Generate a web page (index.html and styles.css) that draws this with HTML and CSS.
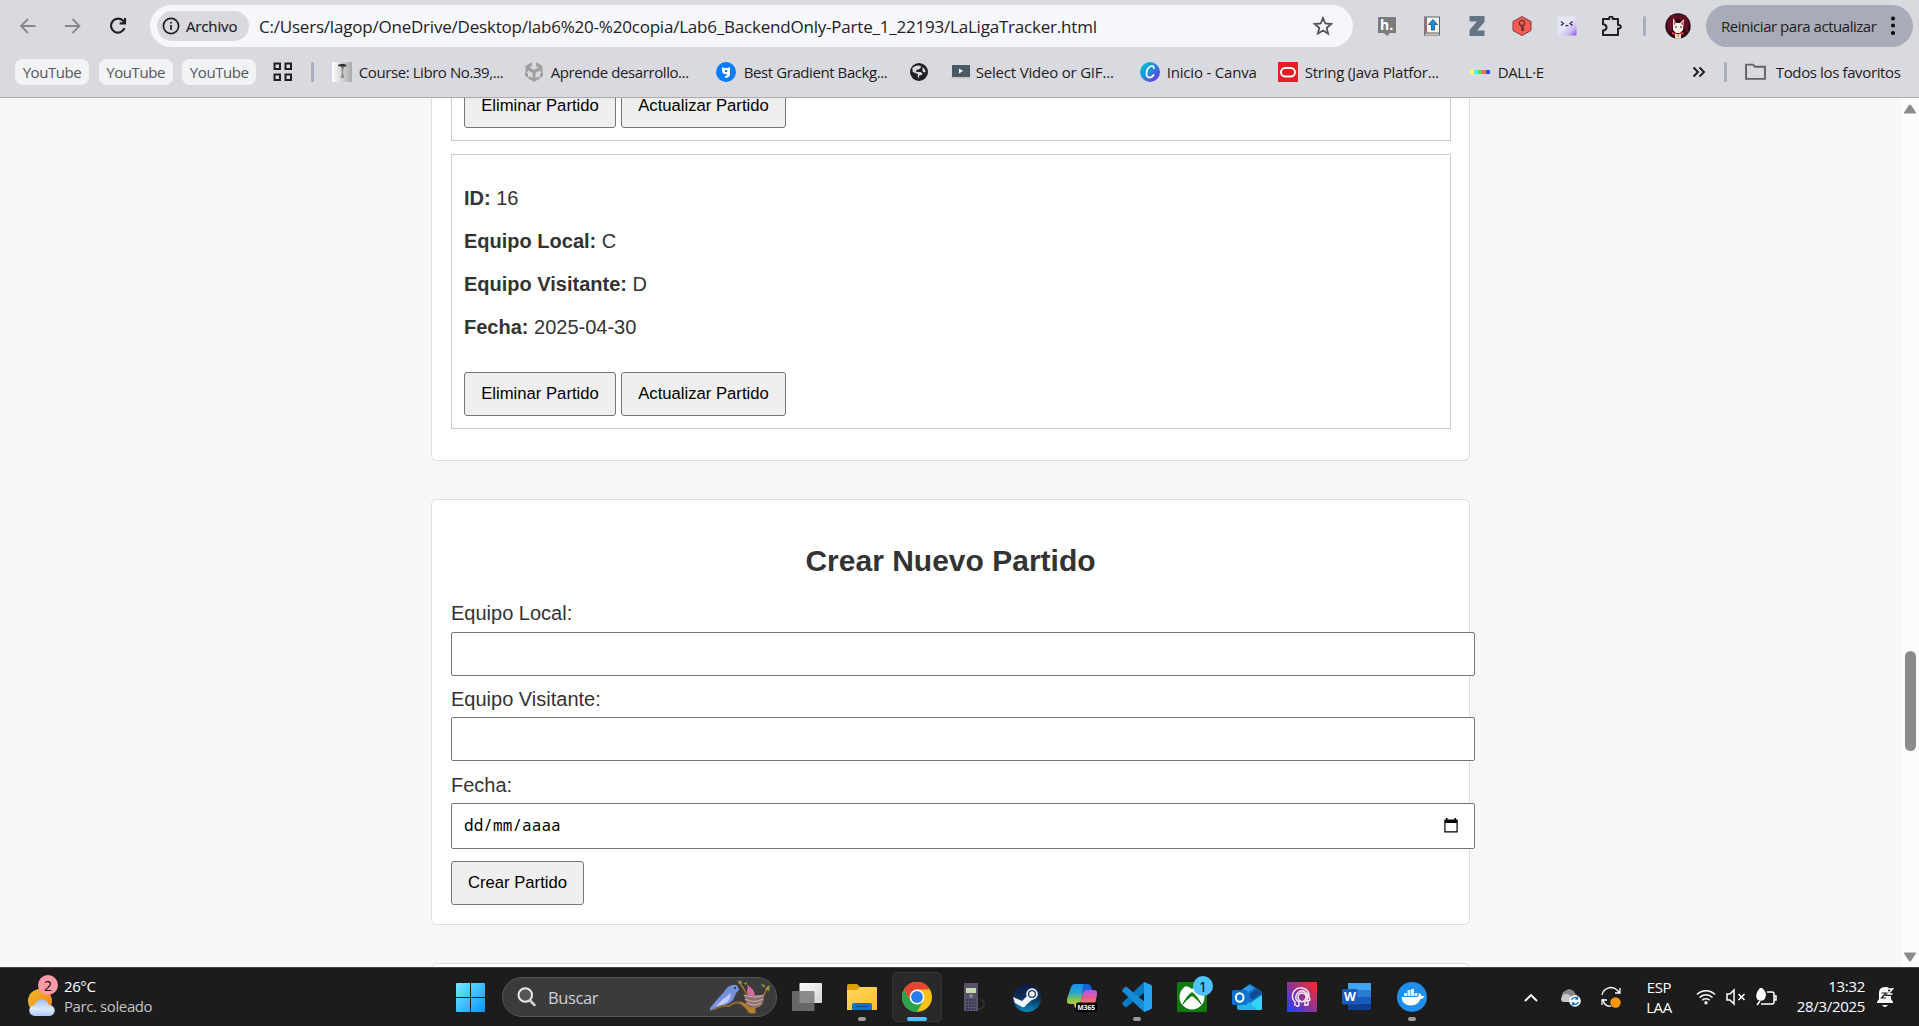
FILE: index.html
```html
<!DOCTYPE html>
<html lang="es">
<head>
<meta charset="utf-8">
<title>LaLiga Tracker</title>
<link rel="stylesheet" href="styles.css">
</head>
<body>
<header class="browser">
  <div class="nav-row">
    <svg class="nav-icon back" viewBox="0 0 20 20"><path d="M17.500 10H3M10 3l-7 7 7 7"/></svg>
    <svg class="nav-icon forward" viewBox="0 0 20 20"><path d="M2 10h14.500M9.500 3l7 7-7 7"/></svg>
    <svg class="nav-icon reload" viewBox="0 0 20 20"><path d="M16.500 12.200A7 7 0 1 1 15.500 5.300L17 7M17 2v5.300h-5.300"/></svg>
    <div class="omnibox">
      <span class="chip"><svg viewBox="0 0 18 18"><circle cx="9" cy="9" r="7.600"/><path d="M9 8v5M9 4.800v1.800"/></svg>Archivo</span>
      <span class="url">C:/Users/lagop/OneDrive/Desktop/lab6%20-%20copia/Lab6_BackendOnly-Parte_1_22193/LaLigaTracker.html</span>
      <svg class="star" viewBox="0 0 20 20"><path d="M10 2l2.300 5.500 5.900.5-4.500 3.900 1.400 5.800-5.100-3.100-5.100 3.100 1.400-5.800L1.800 8l5.900-.5z"/></svg>
    </div>
    <div class="extensions">
      <svg viewBox="0 0 20 20"><path d="M1 1h18v16h-6l-3 3-3-3H1z" fill="#7b7b7b"/><text x="3" y="14" font-size="14" font-weight="700" fill="#fff">h.</text></svg>
      <svg viewBox="0 0 20 20"><path d="M2 .5h16v19H2z" fill="#496681"/><path d="M5 1.500h12v15H5z" fill="#fff3df"/><path d="M3 17.500h14v1.500H3z" fill="#e9c795"/><path d="M2 1h3v16H2z" fill="#8d7481"/><path d="M11 3.500l4.500 5h-3V14h-3V8.500h-3z" fill="#168de7" stroke="#174e7c" stroke-width=".8"/></svg>
      <svg viewBox="0 0 20 20"><path d="M2.500 0h15v6L10 14.500h7.500V20h-15v-6L10 5.500H2.500z" fill="#657482"/></svg>
      <svg viewBox="0 0 20 20"><path d="M10 .5l9 5v9l-9 5-9-5v-9z" fill="#fb5b53" stroke="#793b3b"/><circle cx="10" cy="7" r="2.700" fill="none" stroke="#5e2e31" stroke-width="1.300"/><path d="M10 9.500V15M10 12h2M10 14h2" stroke="#5e2e31" stroke-width="1.400"/></svg>
      <svg viewBox="0 0 20 20"><defs><linearGradient id="lilac" x1="0" y1="0" x2="1" y2="1"><stop offset=".45" stop-color="#e5e7f7"/><stop offset=".75" stop-color="#d1b8f4"/><stop offset="1" stop-color="#8b45e8"/></linearGradient></defs><rect x=".5" y=".5" width="19" height="19" rx="1" fill="url(#lilac)"/><path d="M4 5.500l2.500 2L4 9.500M15.500 5.500l-2.500 2 2.500 2M8.500 9q1.300 1.800 2.700 0" fill="none" stroke="#26223a" stroke-width="1.200"/></svg>
      <svg viewBox="0 0 20 20"><path d="M1 3h6.300q-.3-2.400 1.700-2.400T10.800 3H16v6q2.800-.2 2.800 1.700T16 12.500V19H1v-4.500q3.500-.2 3.500-3T1 8.300z" fill="none" stroke="#1f2023" stroke-width="2" stroke-linejoin="round"/></svg>
    </div>
    <i class="divider"></i>
    <svg class="avatar" viewBox="0 0 26 26"><defs><clipPath id="round"><circle cx="13" cy="13" r="12.700"/></clipPath></defs><g clip-path="url(#round)"><path d="M0 0h26v26H0z" fill="#250811"/><path d="M2 8l5-6h12l5 6-1 12-4-3-2-9-4-3-4 4-2 9-4 3z" fill="#650d24"/><path d="M8 5l3 5h4l4-4-1 11-3 3h-4l-3-3z" fill="#f8eee6"/><path d="M9 7l1.500 4L9 12zM18 8l-2 3 2 1zM7 19l6 2 5-2 1 2-6 2-6-2z" fill="#ed3243"/><path d="M11 13v2M16 13v2" stroke="#372020"/><path d="M10 21h6v5h-6z" fill="#f1e2d3"/><circle cx="13" cy="22.500" r="1.300" fill="#f39b32"/></g></svg>
    <div class="restart">Reiniciar para actualizar<svg viewBox="0 0 4 20"><circle cx="2" cy="2.500" r="2"/><circle cx="2" cy="9.500" r="2"/><circle cx="2" cy="17" r="2"/></svg></div>
  </div>
  <nav class="bookmarks">
    <span class="group">YouTube</span><span class="group">YouTube</span><span class="group">YouTube</span>
    <svg class="apps" viewBox="0 0 20 20"><path d="M1.500 1.500h5.500v5.500H1.500zM12.500 1.500H18v5.500h-5.500zM1.500 12.500h5.500V18H1.500zM12.500 12.500H18V18h-5.500z"/></svg>
    <i class="divider"></i>
    <span class="bm course"><svg viewBox="0 0 20 20"><defs><linearGradient id="paper"><stop stop-color="#fff"/><stop offset="1" stop-color="#aaa"/></linearGradient></defs><path d="M0 0h20v20H0z" fill="url(#paper)"/><path d="M6 3q6-3 9 1l-4 1-5-1z" fill="#333"/><path d="M9 5h3l-1 5 1 6H9l1-6z" fill="#888"/></svg>Course: Libro No.39,...</span>
    <span class="bm unity"><svg viewBox="0 0 20 20"><path d="M8 0v4L5.500 5.500 10 8l4.500-2.500L12 4V0l6.500 4v7L16 9.500v-1L11.500 11v5l3-1.500 2 1.500L10 20l-6.500-4 2-1.500 3 1.500v-5L4 8.500v1L1.500 11V4z" fill="#a0a0a0"/><path d="M1 10l3 1.500v4L1 14zM19 10l-3 1.500v4l3-1.500z" fill="#9b9b9b"/></svg>Aprende desarrollo...</span>
    <span class="bm gradient"><svg viewBox="0 0 20 20"><circle cx="10" cy="10" r="10" fill="#087cff"/><path d="M6 5l2 1h4l2-1v8q-1 3-5 3v-2q2 0 2-2H8q-2-1-2-3zM9 8v2h2V8z" fill="#fff" fill-rule="evenodd"/></svg>Best Gradient Backg...</span>
    <span class="bm icon-only"><svg viewBox="0 0 20 20"><circle cx="10" cy="10" r="9" fill="#202124"/><path d="M3.300 6q5-4 9-1.500-1 3-5 3.500v2h4q3 1 1.500 3l-2.500.5-1 3.500q-1-3-.500-5l-5-2zM13.500 5q3 2 3.300 5-2.500 1-3.300-1z" fill="#d8d9de"/></svg></span>
    <span class="bm gif"><svg viewBox="0 0 20 20"><path d="M0 15h20v2H0z" fill="#c7c9cf"/><path d="M2 3h18v12H2z" fill="#4b5963"/><path d="M9 6.500l4 2.500-4 2.500z" fill="#fff"/></svg>Select Video or GIF...</span>
    <span class="bm canva"><svg viewBox="0 0 20 20"><defs><linearGradient id="canva" x1="0" y1="0" x2="1" y2="1"><stop stop-color="#00d0cd"/><stop offset=".5" stop-color="#2488dc"/><stop offset="1" stop-color="#7b20e9"/></linearGradient></defs><circle cx="10" cy="10" r="10" fill="url(#canva)"/><path d="M13.500 7q1-3-1.500-3c-3 0-6 4-5.500 8 .4 5 5 4.500 7.500.5" fill="none" stroke="#fff" stroke-width="1.600"/></svg>Inicio - Canva</span>
    <span class="bm oracle"><svg viewBox="0 0 20 20"><path d="M0 0h20v20H0z" fill="#ed1c24"/><rect x="3" y="6" width="14" height="8.500" rx="4.200" fill="none" stroke="#fff" stroke-width="2"/></svg>String (Java Platfor...</span>
    <span class="bm dalle"><svg viewBox="0 0 20 20"><path d="M0 8h4v4H0z" fill="#ff6"/><path d="M4 8h4v4H4z" fill="#42f5ee"/><path d="M8 8h4v4H8z" fill="#51da4c"/><path d="M12 8h4v4h-4z" fill="#ff6e3c"/><path d="M16 8h4v4h-4z" fill="#3c46ff"/></svg>DALL·E</span>
    <svg class="more" viewBox="0 0 14 12"><path d="M1.500 1.500L6 6l-4.500 4.500M7.500 1.500L12 6l-4.500 4.500"/></svg>
    <i class="divider"></i>
    <span class="all"><svg viewBox="0 0 20 16"><path d="M1 1.500h6.500l2 2H19v11.500H1z"/></svg>Todos los favoritos</span>
  </nav>
</header>

<div class="viewport">
  <main>
    <section class="card matches">
      <article class="match match-cut"><div class="actions"><button class="remove">Eliminar Partido</button><button class="update">Actualizar Partido</button></div></article>
      <article class="match">
        <p><strong>ID:</strong> 16</p>
        <p><strong>Equipo Local:</strong> C</p>
        <p><strong>Equipo Visitante:</strong> D</p>
        <p><strong>Fecha:</strong> 2025-04-30</p>
        <div class="actions"><button class="remove">Eliminar Partido</button><button class="update">Actualizar Partido</button></div>
      </article>
    </section>
    <section class="card create">
      <h2>Crear Nuevo Partido</h2>
      <label for="local">Equipo Local:</label><input id="local" type="text">
      <label for="away">Equipo Visitante:</label><input id="away" type="text">
      <label class="date-label">Fecha:</label>
      <div class="date"><span>dd/mm/aaaa</span><svg viewBox="0 0 14 15"><path d="M2 0h1.500v1.500h7V0H12v1.500h1.700v13H.3v-13H2zM1.500 5v8.200h11V5z" fill-rule="evenodd"/></svg></div>
      <button class="submit">Crear Partido</button>
    </section>
    <section class="card next"></section>
  </main>
  <aside class="scrollbar">
    <svg viewBox="0 0 14 10"><path d="M7 .5q.7 0 1.200.8L13 8.500q.3 1-1 1H2q-1.300 0-1-1l4.800-7.200Q6.300.5 7 .5z"/></svg>
    <i></i>
    <svg class="down" viewBox="0 0 14 10"><path d="M7 9.500q.7 0 1.200-.8L13 1.500q.3-1-1-1H2q-1.300 0-1 1l4.800 7.200q.5.800 1.200.8z"/></svg>
  </aside>
</div>

<footer class="taskbar">
  <div class="weather">
    <div class="weather-icon"><svg viewBox="0 0 28 36"><defs><linearGradient id="sun" x1="0" y1="0" x2="1" y2="1"><stop stop-color="#f0bd28"/><stop offset="1" stop-color="#f47b1b"/></linearGradient><linearGradient id="cloud" x1="0" y1="0" x2="0" y2="1"><stop stop-color="#9ebff4"/><stop offset=".6" stop-color="#dce9fb"/><stop offset="1" stop-color="#acc8f5"/></linearGradient></defs><circle cx="12" cy="20" r="12" fill="url(#sun)"/><path d="M7 35a5.500 5.500 0 0 1-.5-11 7.500 7.500 0 0 1 14.500 0 5.500 5.500 0 0 1 .5 11z" fill="url(#cloud)"/></svg><b>2</b></div>
    <div class="weather-text"><span>26°C</span><small>Parc. soleado</small></div>
  </div>
  <svg class="start" viewBox="0 0 29 29"><defs><linearGradient id="win" x1="0" y1="0" x2="1" y2="1"><stop stop-color="#75eaff"/><stop offset="1" stop-color="#0795ff"/></linearGradient></defs><path d="M0 1q0-1 1-1h13v14H0zM15 0h13q1 0 1 1v13H15zM0 15h14v14H1q-1 0-1-1zM15 15h14v13q0 1-1 1H15z" fill="url(#win)"/></svg>
  <div class="search">
    <svg class="lens" viewBox="0 0 20 20"><circle cx="8.300" cy="8" r="6.800" fill="#555" stroke="#e6e8eb" stroke-width="2"/><path d="M13 13.500l4.500 4.500" stroke="#cfd2d6" stroke-width="2.500" stroke-linecap="round"/></svg>
    <span>Buscar</span>
    <svg class="bird" viewBox="0 0 60 34"><path d="M3 30q8-5 16-4 6-5 11-3 5 1 8 6l6 3-1-4" fill="none" stroke="#8d682f" stroke-width="2"/><path d="M29 22q8 1 11 6l5-3v8h-5q-4-6-11-11zM28 1l5 6 4 8M58 6l-4 9" fill="#b4822f" stroke="#a9782e" stroke-width="1.200"/><path d="M0 28q8-10 14-16 4-7 9-7 5-1 6 5-3 2-4 6-3 8-11 9-6 0-9 3l-5 3z" fill="#7590df"/><path d="M5 27q7-8 16-14 0 9-9 12z" fill="#bdcaf8"/><circle cx="25" cy="8" r="1" fill="#222"/><path d="M34 15h20q1 12-9 13-9 0-11-13z" fill="#8d7070"/><path d="M34 15q10 4 20 0M35 19q9 5 18 0M37 23q7 4 14 0" fill="none" stroke="#c9aaa2" stroke-width="1.200"/><path d="M38 15q-2-5 0-7l-1-4 4 4q3 1 4 8z" fill="#d66c9e"/><path d="M28 3l4 1-1-4zM35 5l3-3-4 1zM54 8l-3-4 4 1zM55 9l5-4-1 6z" fill="#8f9f38"/></svg>
  </div>
  <div class="apps-row">
    <span class="app"><svg viewBox="0 0 30 30"><defs><linearGradient id="task" x1="0" y1="0" x2="1" y2="1"><stop stop-color="#fff"/><stop offset="1" stop-color="#d3d3d3"/></linearGradient></defs><rect x="7.500" y="1" width="22.500" height="20" rx="1" fill="url(#task)"/><rect y="9" width="22.500" height="20" rx="1" fill="#777" opacity=".83"/></svg></span>
    <span class="app running"><svg viewBox="0 0 30 30"><defs><linearGradient id="folder" x1="0" y1="0" x2="1" y2="1"><stop stop-color="#ffd75e"/><stop offset="1" stop-color="#ffbd2e"/></linearGradient></defs><path d="M0 4q0-2 2-2h8l3 3h15v5H0z" fill="#dba006"/><path d="M0 8h10l3-3h16q1 0 1 1v22H0z" fill="url(#folder)"/><path d="M5 28v-5q0-2 2-2h16q2 0 2 2v5z" fill="#0875cb"/><path d="M9 24.500h12" stroke="#05488d"/></svg></span>
    <span class="app active"><svg viewBox="0 0 30 30"><circle cx="15" cy="15" r="15" fill="#fbc116"/><path d="M2 7.500A15 15 0 0 1 28 7.500H15L8.500 19z" fill="#e94335"/><path d="M2 7.500A15 15 0 0 0 15 30l6.500-11.300L8.500 19z" fill="#2ba24c"/><circle cx="15" cy="15" r="7.400" fill="#fff"/><circle cx="15" cy="15" r="5.900" fill="#277eea"/></svg></span>
    <span class="app"><svg viewBox="0 0 30 30"><path d="M21 27q5 0 6-5 1-4-4-4" fill="none" stroke="#303030" stroke-width="2"/><path d="M7 1h14v28H7z" fill="#55536a"/><path d="M9 6h10v5H9z" fill="#c9dcb0"/><circle cx="14" cy="14" r="2" fill="#8085a2"/><path d="M9 18h10M9 21h10M9 24h10M9 27h10" stroke="#323145" stroke-width="1.300" stroke-dasharray="2 1"/></svg></span>
    <span class="app"><svg viewBox="0 0 30 30"><defs><linearGradient id="steam" x1="0" y1="0" x2="0" y2="1"><stop stop-color="#14183e"/><stop offset=".5" stop-color="#0b315b"/><stop offset="1" stop-color="#078ac1"/></linearGradient></defs><circle cx="15" cy="16" r="14" fill="url(#steam)"/><path d="M1 15l9 4 6-6 5 4-7 6q-1 3-4 2l-7-4z" fill="#f3f5f8"/><circle cx="20" cy="12" r="5.800" fill="#f3f5f8"/><circle cx="20" cy="12" r="3.400" fill="none" stroke="#163a63" stroke-width="1.300"/></svg></span>
    <span class="app"><svg viewBox="0 0 30 30"><defs><linearGradient id="cop1" x1="0" y1="0" x2="0" y2="1"><stop stop-color="#1a8df0"/><stop offset=".35" stop-color="#25a5cf"/><stop offset=".65" stop-color="#84c64d"/><stop offset="1" stop-color="#f5c928"/></linearGradient><linearGradient id="cop2" x1="0" y1="0" x2="0" y2="1"><stop stop-color="#a85cf0"/><stop offset=".55" stop-color="#ec5995"/><stop offset="1" stop-color="#ff8658"/></linearGradient></defs><path d="M8 2h11l-2 6-4 14q-1 5-4 4-2-1-2-4H3q-4 0-3-5L4 5q1-3 4-3z" fill="url(#cop1)"/><path d="M16 2h5q3 0 4 6h-5q-3 0-5 5z" fill="#1565d7"/><path d="M20 8h7q4 0 3 5l-2 9H13l3-11q1-3 4-3z" fill="url(#cop2)"/><rect x="9" y="20.500" width="21" height="9.500" rx="2" fill="#050505"/><text x="10.500" y="28" textLength="17.500" lengthAdjust="spacingAndGlyphs" font-size="7.500" font-weight="700" letter-spacing="0" fill="#fff">M365</text></svg></span>
    <span class="app running"><svg viewBox="0 0 30 30"><path d="M22 0l7 3q1 1 1 2v20q0 1-1 2l-7 3z" fill="#24a5f2"/><path d="M22 0L2 19q-3 2-1 4l2 2q1 1 3-1L24 9z" fill="#0879c7"/><path d="M22 30L2 11q-3-2-1-4l2-2q1-1 3 1l18 15z" fill="#168bd8"/><path d="M22 0v30l7-3q1-1 1-2V5q0-1-1-2z" fill="#27a3ef"/></svg></span>
    <span class="app"><svg viewBox="0 0 30 30"><rect width="30" height="30" rx="1.500" fill="#107c10"/><circle cx="15" cy="15" r="12.500" fill="#fff"/><path d="M7 4.500q4-1 8 2.500 4-3.500 8-2.500-8-6-16 0zM15 10q6 4 10 13-2-1-4-4-3-3-6-5-3 2-6 5-2 3-4 4 4-9 10-13z" fill="#107c10"/></svg><b>1</b></span>
    <span class="app"><svg viewBox="0 0 30 30"><path d="M5 11L17 2.500q1-1 2 0L30 10v17q0 1-2 1H7q-2 0-2-2z" fill="#1372ca"/><path d="M8 10l9-7 5 3-14 10z" fill="#2e9cec"/><path d="M17 13l7-6 6 4-10 7z" fill="#124994"/><path d="M8 28l22-15v14q0 1-2 1z" fill="#38d2f4"/><path d="M5 24l10-5 11 9H8q-3 0-3-4z" fill="#22b6e9"/><rect y="8" width="15.500" height="15" rx="1.500" fill="#0873d1"/><ellipse cx="7.700" cy="15.500" rx="3.800" ry="4.300" fill="none" stroke="#fff" stroke-width="2"/></svg></span>
    <span class="app"><svg viewBox="0 0 30 30"><defs><linearGradient id="head" x1="0" y1="1" x2="1" y2="0"><stop stop-color="#1941ff"/><stop offset=".5" stop-color="#92348f"/><stop offset="1" stop-color="#ff2924"/></linearGradient></defs><path d="M0 0h30v30H0z" fill="url(#head)"/><path d="M8 24v-4q-4-4-2-9 3-6 9-5 7 1 7 8l1 4-2 1v4h-3M12 24H9M18 24v-4q4-3 2-8-3-4-7-3-5 3-4 8 1 2 3 3v4M15 20q-3-1-4-4 0-5 4-5 5 1 4 5-1 3-4 4z" fill="none" stroke="#fff0ff" stroke-width="1.400" stroke-linejoin="round"/></svg></span>
    <span class="app"><svg viewBox="0 0 30 30"><path d="M6 1h23v7H6z" fill="#41a5ee"/><path d="M6 8h23v7H6z" fill="#2b7cd3"/><path d="M6 15h23v7H6z" fill="#185abd"/><path d="M6 22h23v6H6z" fill="#103f91"/><rect y="7" width="15.500" height="15.500" rx="1" fill="#175abc"/><text x="2" y="18.700" font-size="12" font-weight="700" textLength="11.500" lengthAdjust="spacingAndGlyphs" fill="#fff">W</text></svg></span>
    <span class="app running"><svg viewBox="0 0 30 30"><circle cx="15" cy="15" r="15" fill="#1d90ed"/><path d="M4.500 15h16q2-1 1-4 3 1 3 3h3q-1 3-4 3-3 7-10 6.500-8 0-9-8.500z" fill="#fff"/><path d="M7 11h3v3H7zM10.500 11h3v3h-3zM14 11h3v3h-3zM17.500 11h3v3h-3zM10.500 8h3v3h-3zM14 7h3v4h-3z" fill="#dceefe"/></svg></span>
  </div>
  <div class="tray">
    <svg class="chevron" viewBox="0 0 14 9"><path d="M1 8l6-6 6 6"/></svg>
    <svg class="cloud" viewBox="0 0 21 20"><path d="M3 12a5 5 0 0 1 2-8 6 6 0 0 1 10 3q4 1 4 6z" fill="#888"/><path d="M1 12q1-5 6-5 4 1 6 6l-2 2H4q-3 0-3-3z" fill="#c8c8c8"/><circle cx="15" cy="14" r="5.800" fill="#fff"/><path d="M11.500 13a3.700 3.700 0 0 1 6-1.500v-2M18.500 15a3.700 3.700 0 0 1-6 1.500v2M17.500 12h-2M12.500 16h2" fill="none" stroke="#1275c9" stroke-width="1.300"/></svg>
    <svg class="sync" viewBox="0 0 22 22"><path d="M2 9a9 9 0 0 1 15-5l3 3M20 2v5h-5M3 13l1 4q3 4 7 3M2 19v-5h5" fill="none" stroke="#fff" stroke-width="1.300"/><circle cx="15.500" cy="16.500" r="5.200" fill="#ff9800"/></svg>
    <div class="language"><span>ESP</span><span>LAA</span></div>
    <svg class="wifi" viewBox="0 0 20 18"><path d="M1 6.500a12.500 12.500 0 0 1 18 0M3.500 9.500a9 9 0 0 1 13 0M6.200 12.300a5.300 5.300 0 0 1 7.600 0"/><circle cx="10" cy="14.800" r="1.700"/></svg>
    <svg class="sound" viewBox="0 0 20 18"><path d="M1 6h3l4-4v14l-4-4H1zM12.500 6l6 6M18.500 6l-6 6"/></svg>
    <svg class="battery" viewBox="0 0 21 19"><path d="M11 4h5q2 0 2 2v8q0 2-2 2H5M18 8h2v4h-2"/><path class="leaf" d="M5 0q5 4 4 8-1 4-4 4-4 0-4-4 0-4 4-8z"/><path d="M1 17l3-4"/></svg>
    <div class="clock"><span>13:32</span><span>28/3/2025</span></div>
    <svg class="bell" viewBox="0 0 18 22"><path d="M1 16l2-3V7q0-6 6-6 3 0 4 1v6h2v5l2 3v1H1z" fill="#fff"/><path d="M6 19h6q-3 4-6 0z" fill="#fff"/><path d="M5.500 7H10l-4.500 5H10" fill="none" stroke="#1c1c1c" stroke-width="1.200"/><path d="M12 3.500h4.500L12 8.500h4.500" fill="none" stroke="#1c1c1c" stroke-width="3"/><path d="M12 3h4.500L12 8h4.500" fill="none" stroke="#fff" stroke-width="1.400"/></svg>
  </div>
</footer>
</body>
</html>
```

FILE: styles.css
```css
* { box-sizing: border-box; }
body { margin: 0; width: 1919px; height: 1026px; overflow: hidden; display: flex; flex-direction: column; font-family: "Liberation Sans", Arial, sans-serif; color: #333; }
svg { display: block; flex: none; }
button, input { font-family: inherit; }

/* browser chrome */
.browser { height: 98px; flex: none; background: #d9dadf; border-bottom: 1px solid #a9aab0; font-family: "Open Sans", "Noto Sans", sans-serif; color: #1f2023; white-space: nowrap; }
.nav-row { height: 42px; margin-top: 5px; display: flex; align-items: center; }
.nav-icon { width: 20px; height: 20px; fill: none; stroke: #86878b; stroke-width: 1.8; }
.back { margin-left: 18px; }
.forward { margin-left: 25px; }
.reload { margin-left: 25px; stroke: #1f2023; stroke-width: 2.2; }
.omnibox { width: 1203px; height: 42px; margin-left: 22px; border-radius: 21px; background: #f6f7fa; display: flex; align-items: center; padding: 0 20px 0 7px; }
.chip { width: 92px; height: 30px; border-radius: 15px; background: #d9dadf; display: flex; align-items: center; gap: 6px; padding: 0 0 1px 5px; font-size: 15px; font-weight: 500; letter-spacing: -.15px; -webkit-text-stroke: .2px #1f2023; }
.chip svg { width: 18px; height: 18px; fill: none; stroke: #1f2023; stroke-width: 1.7; }
.url { margin-left: 10px; flex: 1; font-size: 17px; letter-spacing: -.21px; }
.star { width: 20px; height: 20px; fill: none; stroke: #505258; stroke-width: 1.8; }
.extensions { display: flex; gap: 25px; margin-left: 24px; }
.extensions svg { width: 20px; height: 20px; font-family: "Open Sans", sans-serif; }
.divider { width: 3px; height: 20px; border-radius: 2px; background: #abadba; flex: none; }
.nav-row .divider { margin-left: 21px; }
.avatar { width: 26px; height: 26px; margin-left: 19px; }
.restart { width: 207px; height: 42px; border-radius: 21px; background: #a8abb8; margin-left: 15px; display: flex; align-items: center; justify-content: space-between; padding: 0 18px 1px 15px; font-size: 15px; letter-spacing: -.47px; }
.restart svg { width: 4px; height: 20px; }
.bookmarks { height: 26px; margin-top: 12px; display: flex; align-items: center; padding: 0 0 1px 15px; font-size: 15px; letter-spacing: -.42px; }
.group { width: 74px; height: 26px; margin-right: 9.6px; border-radius: 8px; background: #f1f3f5; display: flex; align-items: center; justify-content: center; color: #55575c; }
.apps { width: 20px; height: 20px; margin-left: 7px; fill: none; stroke: #1f2023; stroke-width: 2; }
.bookmarks .divider { margin: 0 18px; }
.bm { width: 192px; flex: none; display: flex; align-items: center; gap: 7px; }
.bm svg { width: 20px; height: 20px; }
.bm.gradient { width: 193px; gap: 8px; }
.bm.icon-only { width: 41px; }
.bm.gif { width: 190px; gap: 6px; letter-spacing: -.2px; }
.bm.canva { width: 138px; letter-spacing: -.2px; }
.bm.oracle { letter-spacing: -.25px; }
.bm.dalle { width: 222px; gap: 8px; }
.more { width: 14px; height: 12px; fill: none; stroke: #1f2023; stroke-width: 2; }
.all { display: flex; align-items: center; gap: 10px; letter-spacing: -.37px; }
.all svg { width: 21px; height: 17px; fill: none; stroke: #606267; stroke-width: 1.8; }

/* page */
.viewport { flex: 1; min-height: 0; display: flex; justify-content: space-between; background: #f7f7f7; overflow: hidden; font-size: 20px; line-height: 23px; }
main { width: 1039px; margin-left: 431px; flex: none; }
.card { background: #fff; border: 1px solid #ddd; border-radius: 6px; padding: 0 19px; }
.matches { height: 363px; border-top: 0; border-radius: 0 0 6px 6px; overflow: hidden; }
.match { width: 1000px; border: 1px solid #ccc; padding: 12px; }
.match p { margin: 20px 0; }
.match + .match { margin-top: 13px; height: 275px; }
.match-cut { border-top: 0; padding-top: 0; height: 43px; display: flex; align-items: flex-end; }
.actions { display: flex; gap: 5px; }
.match p + .actions { margin-top: 33px; }
button { height: 44px; flex: none; padding: 0 0 1px; border: 1px solid #767676; border-radius: 3px; background: #efefef; color: #000; font-size: 16.667px; }
.remove { width: 152px; }
.update { width: 165px; }
.create { margin-top: 38px; height: 426px; display: flex; flex-direction: column; align-items: flex-start; }
h2 { margin: 43px 0 24px; align-self: center; font-size: 30px; line-height: 35px; }
label { height: 23px; margin-bottom: 7px; }
input, .date { width: 1024px; height: 44px; flex: none; border: 1px solid #767676; border-radius: 2px; background: #fff; margin: 0 0 12px; }
input + label { margin-bottom: 6px; }
label.date-label { margin-top: 1px; }
.date { height: 46px; display: flex; align-items: center; justify-content: space-between; padding: 0 16px 1px 12px; font-family: "Noto Sans Mono", "DejaVu Sans Mono", monospace; font-size: 16px; letter-spacing: .08px; color: #000; }
.date svg { width: 14px; height: 15px; }
.submit { width: 133px; }
.next { margin-top: 38px; height: 80px; }
.scrollbar { width: 18px; background: #fcfcfc; display: flex; flex-direction: column; align-items: center; }
.scrollbar svg { width: 14px; height: 10px; margin-top: 6px; fill: #8b8b8b; }
.scrollbar i { width: 11px; height: 100px; margin-top: 537px; border-radius: 6px; background: #8b8b8b; }
.scrollbar .down { margin-top: 201px; }

/* taskbar */
.taskbar { height: 59px; flex: none; background: #1c1c1c; border-top: 1px solid #434545; display: flex; align-items: center; color: #fff; font-family: "Open Sans", "Noto Sans", sans-serif; font-size: 15px; letter-spacing: -.4px; white-space: nowrap; }
.weather { width: 428px; margin-left: 28px; display: flex; align-items: center; gap: 7px; }
.weather-icon { position: relative; width: 29px; height: 44px; }
.weather-icon svg { width: 28px; height: 36px; margin-top: 6px; }
.weather-icon b, .app b { position: absolute; width: 20px; height: 20px; border-radius: 50%; display: grid; place-items: center; font-size: 14px; font-weight: 400; color: #000; letter-spacing: 0; }
.weather-icon b { left: 10px; top: 0; background: #ff9aa6; }
.weather-text { display: flex; flex-direction: column; line-height: 20px; padding-bottom: 2px; }
.weather-text small { font-size: 15px; color: #c4c4c4; }
.start { width: 29px; height: 29px; }
.search { width: 275px; height: 40px; margin-left: 17px; border: 1px solid #555; border-radius: 20px; background: #3b3b3b; display: flex; align-items: center; padding: 0 6px 0 14px; color: #d0d0d0; font-size: 16.5px; }
.lens { width: 20px; height: 20px; margin-right: 11px; }
.bird { width: 60px; height: 34px; margin-left: auto; }
.apps-row { display: flex; gap: 5px; margin-left: 5px; }
.app { position: relative; width: 50px; height: 50px; display: grid; place-items: center; border-radius: 5px; }
.app svg { width: 30px; height: 30px; }
.app.active { background: #292929; border: 1px solid #343434; }
.app.running::after, .app.active::after { content: ""; position: absolute; bottom: 1px; left: 21px; width: 8px; height: 4px; border-radius: 2px; background: #9a9a9a; }
.app.active::after { bottom: 0; left: 14px; width: 20px; background: #4cc2ff; }
.app b { left: 26px; top: 4px; background: #4cc2ff; }
.tray { display: flex; align-items: center; margin-left: 87px; }
.tray svg { fill: none; stroke: #fff; stroke-width: 1.5; }
.chevron { width: 14px; height: 9px; }
.tray .chevron { stroke-width: 1.9; }
.tray .cloud, .tray .sync, .tray .bell { stroke: none; }
.cloud { width: 21px; height: 20px; margin-left: 22px; }
.sync { width: 22px; height: 22px; margin-left: 19px; }
.language, .clock { display: flex; flex-direction: column; line-height: 20px; padding-bottom: 2px; }
.language { width: 28px; margin-left: 23px; align-items: center; padding-bottom: 0; }
.wifi { width: 20px; height: 18px; margin-left: 23px; }
.tray .wifi circle { fill: #fff; stroke: none; }
.sound { width: 20px; height: 18px; margin-left: 10px; }
.battery { width: 21px; height: 19px; margin-left: 10px; }
.battery .leaf { fill: #fff; }
.clock { width: 88px; align-items: flex-end; letter-spacing: -.3px; }
.bell { width: 18px; height: 22px; margin-left: 11px; }
```
